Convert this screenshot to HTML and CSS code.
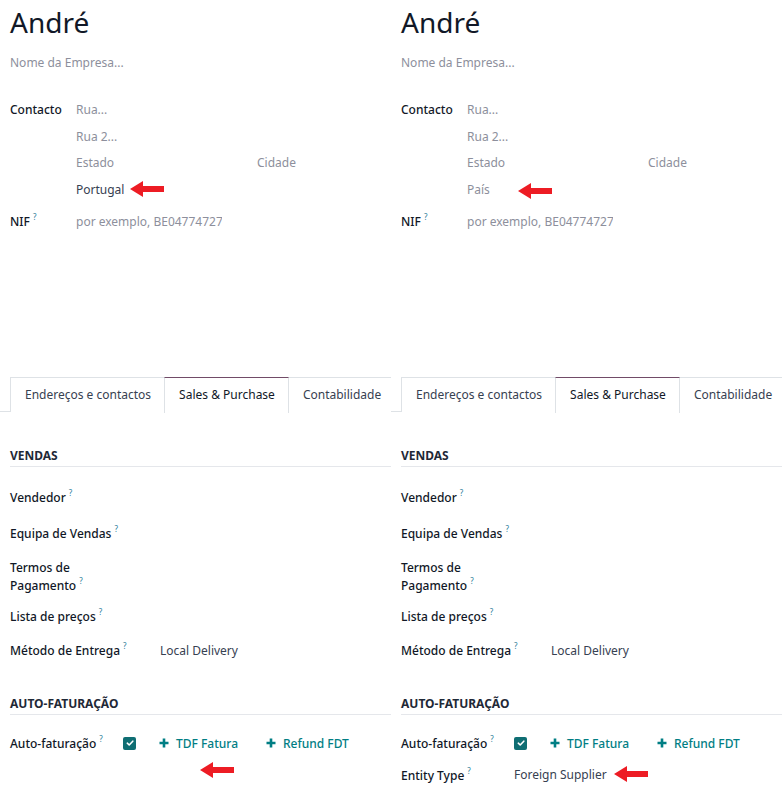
FILE: index.html
```html
<!DOCTYPE html>
<html lang="pt">
<head>
<meta charset="utf-8">
<title>André</title>
<link rel="stylesheet" href="styles.css">
</head>
<body>
<div class="split">
  <section class="panel">
    <h1 class="title">André</h1>
    <div class="company">Nome da Empresa...</div>
    <div class="contact">
      <div class="c-label">Contacto</div>
      <div class="c-fields">
        <div class="c-line ph">Rua...</div>
        <div class="c-line ph">Rua 2...</div>
        <div class="c-line c-pair"><span class="ph c-state">Estado</span><span class="ph">Cidade</span></div>
        <div class="c-line val country">Portugal<svg class="arrow arrow-a" viewBox="0 0 34 16"><polygon points="0,8 13,0 13,5 34,5 34,11 13,11 13,16" fill="#ed1c24"/></svg></div>
      </div>
    </div>
    <div class="contact nif">
      <div class="c-label">NIF<sup class="q">?</sup></div>
      <div class="c-fields"><div class="nif-input ph">por exemplo, BE0477472701</div></div>
    </div>

    <nav class="tabs">
      <span class="tab">Endereços e contactos</span>
      <span class="tab active">Sales &amp; Purchase</span>
      <span class="tab">Contabilidade</span>
    </nav>

    <h2 class="group">VENDAS</h2>
    <div class="row"><div class="lbl">Vendedor<sup class="q">?</sup></div></div>
    <div class="row row-wide"><div class="lbl">Equipa de Vendas<sup class="q">?</sup></div></div>
    <div class="row"><div class="lbl lbl-narrow">Termos de Pagamento<sup class="q">?</sup></div></div>
    <div class="row row-tight"><div class="lbl">Lista de preços<sup class="q">?</sup></div></div>
    <div class="row"><div class="lbl">Método de Entrega<sup class="q">?</sup></div><div class="val">Local Delivery</div></div>

    <h2 class="group group-2">AUTO-FATURAÇÃO</h2>
    <div class="arow">
      <div class="albl">Auto-faturação<sup class="q">?</sup></div>
      <span class="check"><svg viewBox="0 0 12 12"><path d="M3.3 6.2 L5.2 8 L8.8 4.2" stroke="#fff" stroke-width="1.6" fill="none" stroke-linecap="round" stroke-linejoin="round"/></svg></span>
      <span class="btn"><svg class="plus" viewBox="0 0 10 10"><path d="M5 0.5 V9.5 M0.5 5 H9.5" stroke="currentColor" stroke-width="2.6"/></svg>TDF Fatura</span>
      <span class="btn"><svg class="plus" viewBox="0 0 10 10"><path d="M5 0.5 V9.5 M0.5 5 H9.5" stroke="currentColor" stroke-width="2.6"/></svg>Refund FDT</span>
    </div>
    <div class="arow arow-empty"><svg class="arrow arrow-b" viewBox="0 0 34 16"><polygon points="0,8 13,0 13,5 34,5 34,11 13,11 13,16" fill="#ed1c24"/></svg></div>
  </section>

  <section class="panel">
    <h1 class="title">André</h1>
    <div class="company">Nome da Empresa...</div>
    <div class="contact">
      <div class="c-label">Contacto</div>
      <div class="c-fields">
        <div class="c-line ph">Rua...</div>
        <div class="c-line ph">Rua 2...</div>
        <div class="c-line c-pair"><span class="ph c-state">Estado</span><span class="ph">Cidade</span></div>
        <div class="c-line ph country">País<svg class="arrow arrow-c" viewBox="0 0 34 16"><polygon points="0,8 13,0 13,5 34,5 34,11 13,11 13,16" fill="#ed1c24"/></svg></div>
      </div>
    </div>
    <div class="contact nif">
      <div class="c-label">NIF<sup class="q">?</sup></div>
      <div class="c-fields"><div class="nif-input ph">por exemplo, BE0477472701</div></div>
    </div>

    <nav class="tabs">
      <span class="tab">Endereços e contactos</span>
      <span class="tab active">Sales &amp; Purchase</span>
      <span class="tab">Contabilidade</span>
    </nav>

    <h2 class="group">VENDAS</h2>
    <div class="row"><div class="lbl">Vendedor<sup class="q">?</sup></div></div>
    <div class="row row-wide"><div class="lbl">Equipa de Vendas<sup class="q">?</sup></div></div>
    <div class="row"><div class="lbl lbl-narrow">Termos de Pagamento<sup class="q">?</sup></div></div>
    <div class="row row-tight"><div class="lbl">Lista de preços<sup class="q">?</sup></div></div>
    <div class="row"><div class="lbl">Método de Entrega<sup class="q">?</sup></div><div class="val">Local Delivery</div></div>

    <h2 class="group group-2">AUTO-FATURAÇÃO</h2>
    <div class="arow">
      <div class="albl">Auto-faturação<sup class="q">?</sup></div>
      <span class="check"><svg viewBox="0 0 12 12"><path d="M3.3 6.2 L5.2 8 L8.8 4.2" stroke="#fff" stroke-width="1.6" fill="none" stroke-linecap="round" stroke-linejoin="round"/></svg></span>
      <span class="btn"><svg class="plus" viewBox="0 0 10 10"><path d="M5 0.5 V9.5 M0.5 5 H9.5" stroke="currentColor" stroke-width="2.6"/></svg>TDF Fatura</span>
      <span class="btn"><svg class="plus" viewBox="0 0 10 10"><path d="M5 0.5 V9.5 M0.5 5 H9.5" stroke="currentColor" stroke-width="2.6"/></svg>Refund FDT</span>
    </div>
    <div class="arow">
      <div class="albl">Entity Type<sup class="q">?</sup></div>
      <span class="val2">Foreign Supplier<svg class="arrow arrow-d" viewBox="0 0 34 16"><polygon points="0,8 13,0 13,5 34,5 34,11 13,11 13,16" fill="#ed1c24"/></svg></span>
    </div>
  </section>
</div>
</body>
</html>
```

FILE: styles.css
```css
* { box-sizing: border-box; }
html, body { margin: 0; padding: 0; background: #fff; }
body {
  font-family: "Noto Sans", "Open Sans", sans-serif;
  font-size: 12px;
  color: #1f2430;
}
.split { display: flex; width: 782px; height: 799px; overflow: hidden; }
.panel { width: 391px; flex: 0 0 391px; overflow: hidden; position: relative; }

.title {
  margin: 0; padding: 5px 0 0 10px;
  font-size: 28px; font-weight: 400; line-height: 34px; color: #111827;
}
.company { padding-left: 10px; margin-top: 14px; line-height: 20px; color: #8d8f9c; }
.ph { color: #8d8f9c; }
.val { color: #374151; }

.contact { display: flex; margin-top: 24px; padding-left: 10px; }
.c-label { width: 66px; flex: 0 0 66px; line-height: 26px; font-weight: 500; color: #111827; }
.c-fields { flex: 1; }
.c-line { height: 26.5px; line-height: 26px; position: relative; }
.c-pair { display: flex; }
.c-state { width: 181px; }
.country { display: inline-block; }
.nif { margin-top: 6px; }
.nif-input { width: 146px; white-space: nowrap; overflow: hidden; line-height: 26px; }

.q { font-size: 8px; color: #2c7d9a; margin-left: 3px; vertical-align: 6px; line-height: 0; font-weight: 400; }

.arrow { position: absolute; width: 34px; height: 16px; }
.arrow-a { left: 54px; top: 4px; }
.arrow-c { left: 51px; top: 6px; }
.arrow-b { left: 200px; top: 3px; }
.arrow-d { left: 100px; top: 0px; }

.tabs {
  display: flex; margin-top: 142px; padding-left: 10px;
  border-bottom: 1px solid #dee2e6; height: 35px;
}
.tab {
  height: 35px; padding: 0 13px 0 14px; line-height: 33px;
  border: 1px solid #dee2e6; border-bottom: none; margin-right: -1px;
  color: #374151; background: #fff; white-space: nowrap;
}
.tab.active {
  border-top-color: #714b67; color: #111827;
  position: relative; margin-bottom: -1px; height: 36px; z-index: 1;
}

.group {
  margin: 35px 0 0 10px; font-size: 12px; font-weight: 700; color: #1f2937;
  line-height: 18px; padding-bottom: 1px; border-bottom: 1px solid #e5e7eb;
}
.group-2 { margin-top: 35px; }

.row { display: flex; padding-left: 10px; margin-top: 16px; min-height: 18px; line-height: 18px; }
.row-wide { margin-top: 18px; }
.row-tight { margin-top: 13px; }
.group + .row { margin-top: 22px; }
.lbl { width: 150px; flex: 0 0 150px; font-weight: 500; color: #111827; }
.lbl-narrow { flex: 0 0 150px; padding-right: 60px; }

.arow { display: flex; align-items: center; padding-left: 10px; height: 32px; position: relative; }
.group + .arow { margin-top: 12px; }
.arow-empty { height: 32px; }
.albl { width: 113px; flex: 0 0 113px; font-weight: 500; color: #111827; }
.check {
  width: 13px; height: 13px; border-radius: 2px; background: #0f6e73;
  display: inline-flex; align-items: center; justify-content: center; margin-right: 23px;
}
.check svg { width: 12px; height: 12px; }
.btn { color: #017e84; font-weight: 500; margin-right: 28px; display: inline-flex; align-items: center; }
.plus { width: 10px; height: 10px; margin-right: 7px; }
.val2 { color: #374151; position: relative; display: inline-block; line-height: 18px; }
```
